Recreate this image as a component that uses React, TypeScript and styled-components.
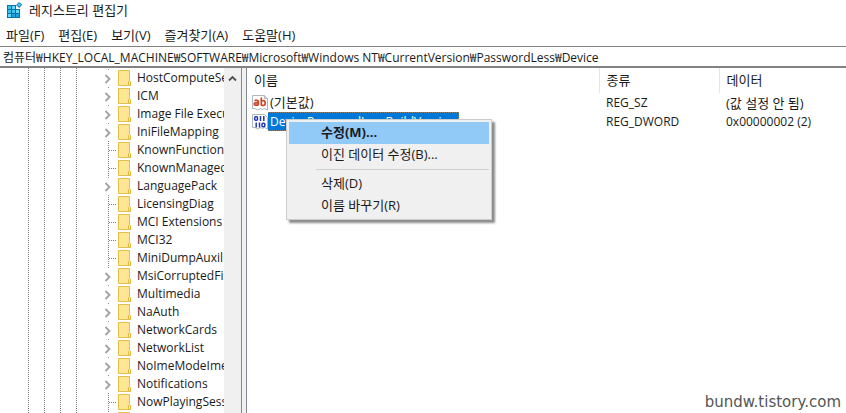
import React from "react";
import styled, { createGlobalStyle, css } from "styled-components";

const GlobalStyle = createGlobalStyle`
  *, *::before, *::after { box-sizing: border-box; }
  body {
    margin: 0;
    background: #fff;
    color: #1a1a1a;
    font: 12px/18px "Open Sans", "Noto Sans CJK KR", sans-serif;
  }
  button, input { font: inherit; color: inherit; }
`;

const Window = styled.div`
  position: relative;
  display: flex;
  flex-direction: column;
  height: 100vh;
  overflow: hidden;
  background: #fff;
`;

const TitleBar = styled.header`
  display: flex;
  align-items: center;
  gap: 6px;
  height: 22px;
  padding: 0 0 2px 6px;
`;

const Title = styled.h1`
  margin: 0;
  font-size: 13px;
  font-weight: 400;
`;

const MenuBar = styled.nav`
  display: flex;
  align-items: center;
  gap: 14px;
  height: 24px;
  padding: 2px 6px 0;
`;

const MenuButton = styled.button`
  padding: 0;
  border: 0;
  background: none;
  font-size: 13px;
  white-space: nowrap;
`;

const AddressInput = styled.input`
  width: 100%;
  height: 22px;
  padding: 0 3px;
  border: 0;
  border-top: 1px solid #828282;
  border-bottom: 2px solid #828282;
  border-radius: 0;
  outline: 0;
  background: #fff;
`;

const Panes = styled.main`
  display: flex;
  flex: 1;
  min-height: 0;
`;

const TreePane = styled.section`
  display: flex;
  flex: 0 0 242px;
  min-width: 0;
  border-right: 1px solid #828790;
`;

const Guides = styled.div`
  display: flex;
  gap: 15px;
  flex: 0 0 104px;
  padding-left: 28px;
`;

const dots = (direction: string) => css`
  background: repeating-linear-gradient(${direction}, #808080 0 1px, transparent 1px 2px);
`;

const Guide = styled.span`
  width: 1px;
  ${dots("to bottom")}
`;

const Tree = styled.ul`
  flex: 1;
  min-width: 0;
  margin: 0;
  padding: 1px 0 0;
  overflow: hidden;
  list-style: none;
`;

const TreeRow = styled.li`
  display: flex;
  align-items: center;
  height: 18px;
  white-space: nowrap;

  & > * {
    flex-shrink: 0;
  }
`;

const Branch = styled.span`
  display: grid;
  grid-template-columns: 1px 7px;
  align-items: center;
  align-self: stretch;
  width: 14px;
  padding-left: 4px;
`;

const BranchStem = styled.span`
  align-self: stretch;
  ${dots("to bottom")}
`;

const BranchArm = styled.span`
  height: 1px;
  ${dots("to right")}
`;

const Expander = styled.button`
  display: flex;
  flex-direction: column;
  align-items: flex-start;
  justify-content: center;
  width: 14px;
  height: 18px;
  padding: 2px 0 0;
  border: 0;
  background: linear-gradient(#909090, #909090) 4px 0 / 1px 1px no-repeat;
`;

const TreeLabel = styled.span`
  padding-left: 5px;
`;

const ScrollBar = styled.div`
  flex: 0 0 17px;
  background: #f0f0f0;
`;

const ScrollButton = styled.button`
  display: flex;
  align-items: center;
  justify-content: center;
  width: 16px;
  height: 20px;
  padding: 0;
  border: 0;
  background: none;
`;

const Splitter = styled.div`
  flex: 0 0 5px;
  border-right: 1px solid #828790;
  background: #f0f0f0;
`;

const ListPane = styled.section`
  flex: 1;
  min-width: 0;
`;

const ValueTable = styled.table`
  width: 100%;
  border-collapse: collapse;
  table-layout: fixed;
`;

const HeaderCell = styled.th<{ $width?: number }>`
  width: ${({ $width }) => ($width ? `${$width}px` : "auto")};
  height: 25px;
  padding: 0 7px 2px;
  border-right: ${({ $width }) => ($width ? "1px solid #e5e5e5" : "0")};
  font-size: 13px;
  font-weight: 400;
  text-align: left;
`;

const Cell = styled.td<{ $hangul?: boolean }>`
  height: 19px;
  padding: 0 7px;
  font-size: ${({ $hangul }) => ($hangul ? "13px" : "12px")};
  white-space: nowrap;
`;

const NameCell = styled(Cell)`
  padding: 0 5px;
`;

const Name = styled.div`
  display: flex;
  align-items: center;
`;

const NameText = styled.span<{ $selected?: boolean }>`
  padding: 0 2px;
  border: 1px dotted transparent;
  border-left: 0;
  line-height: 17px;
  ${({ $selected }) =>
    $selected &&
    css`
      border-color: #8f7f6c;
      background: #0078d7;
      color: #fff;
    `}
`;

const ContextMenu = styled.div`
  position: absolute;
  top: 119px;
  left: 286px;
  width: 206px;
  padding: 2px;
  border: 1px solid #ccc;
  background: #f0f0f0;
  box-shadow: 3px 3px 2px rgba(0, 0, 0, 0.45);
`;

const ContextItem = styled.button<{ $active?: boolean }>`
  display: block;
  width: 100%;
  height: 22px;
  padding: 0 32px 2px;
  border: 0;
  background: ${({ $active }) => ($active ? "#91c9f7" : "transparent")};
  font-size: 13px;
  font-weight: ${({ $active }) => ($active ? 700 : 400)};
  text-align: left;
`;

const Divider = styled.hr`
  height: 1px;
  margin: 3px 0 3px 27px;
  border: 0;
  background: #d0d0d0;
`;

const Watermark = styled.footer`
  position: absolute;
  right: 5px;
  bottom: 2px;
  color: #555;
  font: 15px/18px "DejaVu Sans", sans-serif;
`;

const RegistryIcon = () => (
  <svg width="17" height="16" viewBox="0 0 17 16" aria-hidden="true">
    <path d="M1 3h9v4h4v9H1z" fill="#0b6fa8" />
    <path d="M2 4h3v3H2zM2 8h3v3H2zM6 8h3v3H6z" fill="#35c3ee" />
    <path d="M6 4h3v3H6zM10 8h3v3h-3zM2 12h3v3H2z" fill="#63d8f8" />
    <path d="M6 12h3v3H6zM10 12h3v3h-3z" fill="#1ba4dc" />
    <path d="M13 0l3.2 2.500L13.500 6 10 3.200z" fill="#1686bf" />
    <path d="M13 1.200l1.900 1.400-1.500 2-2-1.600z" fill="#5bcdf2" />
  </svg>
);

const FolderIcon = () => (
  <svg width="14" height="18" viewBox="0 0 14 18" aria-hidden="true">
    <path d="M.5 1.5h11v10l1 1v4H.5z" fill="#ffe694" stroke="#e3c04a" />
    <path d="M10.5 16.5v-4l1-1 1 1v4z" fill="#fff0a8" stroke="#dfb93c" />
  </svg>
);

const ChevronRight = () => (
  <svg width="8" height="10" viewBox="0 0 8 10" aria-hidden="true">
    <path d="M1.5 1l4 4-4 4" fill="none" stroke="#a2a2a2" strokeWidth="1.8" />
  </svg>
);

const ChevronUp = () => (
  <svg width="9" height="7" viewBox="0 0 9 7" aria-hidden="true">
    <path d="M1 5.5L4.5 2 8 5.5" fill="none" stroke="#505050" strokeWidth="1.8" />
  </svg>
);

const page = "M.5 .5h12l3 3v11.5l-3-1.5-2 1-2-1-3 1.5-2.500-1.500H.5z";

const StringIcon = () => (
  <svg width="16" height="16" viewBox="0 0 16 16" aria-hidden="true">
    <path d={page} fill="#fff" stroke="#aeb6c0" />
    <path d="M12.500 .5v3h3" fill="#e4e8ee" stroke="#aeb6c0" />
    <g fill="none" stroke="#cb4426" strokeWidth="1.7">
      <path d="M2.500 5.300h2.500q1.300 0 1.300 1.300v4M6 7.800H3.600q-1.400 0-1.400 1.200t1.400 1.200H6" />
      <path d="M9.300 2.500v8M9.300 6q3.900-1.500 3.900 2t-3.900 2" />
    </g>
  </svg>
);

const BinaryIcon = () => (
  <svg width="16" height="16" viewBox="0 0 16 16" aria-hidden="true">
    <path d={page} fill="#fff" stroke="#aeb6c0" />
    <g fill="none" stroke="#2238b5" strokeWidth="1.500">
      <rect x="2.700" y="2.700" width="2.800" height="3.600" rx="1" />
      <path d="M8.500 2v5M11.800 2v5M4.200 8.500v5M7.500 8.500v5" />
      <rect x="10" y="9.200" width="2.800" height="3.600" rx="1" />
    </g>
  </svg>
);

const menus = ["파일(F)", "편집(E)", "보기(V)", "즐겨찾기(A)", "도움말(H)"];

const keys: { name: string; expandable?: boolean }[] = [
  { name: "HostComputeSe", expandable: true },
  { name: "ICM", expandable: true },
  { name: "Image File Execu", expandable: true },
  { name: "IniFileMapping", expandable: true },
  { name: "KnownFunctionT" },
  { name: "KnownManaged" },
  { name: "LanguagePack", expandable: true },
  { name: "LicensingDiag" },
  { name: "MCI Extensions" },
  { name: "MCI32" },
  { name: "MiniDumpAuxil" },
  { name: "MsiCorruptedFile", expandable: true },
  { name: "Multimedia", expandable: true },
  { name: "NaAuth", expandable: true },
  { name: "NetworkCards", expandable: true },
  { name: "NetworkList", expandable: true },
  { name: "NoImeModeIme", expandable: true },
  { name: "Notifications", expandable: true },
  { name: "NowPlayingSess" },
  { name: "" },
];

export default function App() {
  return (
    <Window>
      <GlobalStyle />
      <TitleBar>
        <RegistryIcon />
        <Title>레지스트리 편집기</Title>
      </TitleBar>
      <MenuBar>
        {menus.map((label) => (
          <MenuButton key={label}>{label}</MenuButton>
        ))}
      </MenuBar>
      <AddressInput
        aria-label="주소"
        defaultValue="컴퓨터₩HKEY_LOCAL_MACHINE₩SOFTWARE₩Microsoft₩Windows NT₩CurrentVersion₩PasswordLess₩Device"
      />
      <Panes>
        <TreePane>
          <Guides>
            <Guide />
            <Guide />
            <Guide />
            <Guide />
          </Guides>
          <Tree>
            {keys.map(({ name, expandable }) => (
              <TreeRow key={name}>
                {expandable ? (
                  <Expander aria-label={name}>
                    <ChevronRight />
                  </Expander>
                ) : (
                  <Branch>
                    <BranchStem />
                    <BranchArm />
                  </Branch>
                )}
                <FolderIcon />
                <TreeLabel>{name}</TreeLabel>
              </TreeRow>
            ))}
          </Tree>
          <ScrollBar>
            <ScrollButton aria-label="위로">
              <ChevronUp />
            </ScrollButton>
          </ScrollBar>
        </TreePane>
        <Splitter />
        <ListPane>
          <ValueTable>
            <thead>
              <tr>
                <HeaderCell $width={352}>이름</HeaderCell>
                <HeaderCell $width={120}>종류</HeaderCell>
                <HeaderCell>데이터</HeaderCell>
              </tr>
            </thead>
            <tbody>
              <tr>
                <NameCell $hangul>
                  <Name>
                    <StringIcon />
                    <NameText>(기본값)</NameText>
                  </Name>
                </NameCell>
                <Cell>REG_SZ</Cell>
                <Cell $hangul>(값 설정 안 됨)</Cell>
              </tr>
              <tr>
                <NameCell>
                  <Name>
                    <BinaryIcon />
                    <NameText $selected>DevicePasswordLessBuildVersion</NameText>
                  </Name>
                </NameCell>
                <Cell>REG_DWORD</Cell>
                <Cell>0x00000002 (2)</Cell>
              </tr>
            </tbody>
          </ValueTable>
        </ListPane>
      </Panes>
      <ContextMenu role="menu">
        <ContextItem role="menuitem" $active>
          수정(M)...
        </ContextItem>
        <ContextItem role="menuitem">이진 데이터 수정(B)...</ContextItem>
        <Divider />
        <ContextItem role="menuitem">삭제(D)</ContextItem>
        <ContextItem role="menuitem">이름 바꾸기(R)</ContextItem>
      </ContextMenu>
      <Watermark>bundw.tistory.com</Watermark>
    </Window>
  );
}
